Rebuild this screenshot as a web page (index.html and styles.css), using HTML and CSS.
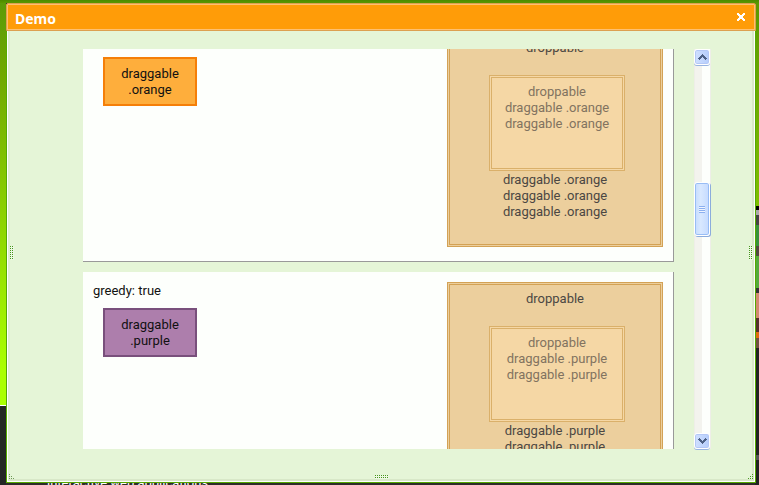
FILE: index.html
```
<!DOCTYPE html>
<html lang="en">
<head>
<meta charset="utf-8">
<title>Demo</title>
<link rel="stylesheet" href="styles.css">
</head>
<body>
<p class="page-text">interactive web applications.</p>
<section class="window" aria-label="Demo">
  <header class="titlebar">
    <h1 class="title">Demo</h1>
    <button class="close" type="button" aria-label="Close">
      <svg width="8" height="8" viewBox="0 0 8 8" shape-rendering="crispEdges"><path fill="#fff" d="M0 0h2v1h1v1h2v-1h1v-1h2v2h-1v1h-1v2h1v1h1v2h-2v-1h-1v-1h-2v1h-1v1h-2v-2h1v-1h1v-2h-1v-1h-1z"/></svg>
    </button>
  </header>
  <div class="content">
    <main class="viewport">
      <div class="demos">
        <section class="card">
          <div class="source">
            <p class="caption"></p>
            <div class="draggable orange">draggable<br>.orange</div>
          </div>
          <div class="droppable">
            <p>droppable</p>
            <div class="droppable-inner">
              <p>droppable</p>
              <p>draggable .orange</p>
              <p>draggable .orange</p>
            </div>
            <p>draggable .orange</p>
            <p>draggable .orange</p>
            <p>draggable .orange</p>
          </div>
        </section>
        <section class="card">
          <div class="source">
            <p class="caption">greedy: true</p>
            <div class="draggable purple">draggable<br>.purple</div>
          </div>
          <div class="droppable">
            <p>droppable</p>
            <div class="droppable-inner">
              <p>droppable</p>
              <p>draggable .purple</p>
              <p>draggable .purple</p>
            </div>
            <p>draggable .purple</p>
            <p>draggable .purple</p>
          </div>
        </section>
      </div>
    </main>
    <div class="scrollbar">
      <button class="arrow" type="button" aria-label="Scroll up">
        <svg width="9" height="6" viewBox="0 0 9 6" shape-rendering="crispEdges"><path fill="#4d6185" d="M4 0h1v1h1v1h1v1h1v1h1v1h-1v1h-1v-1h-1v-1h-1v-1h-1v1h-1v1h-1v1h-1v-1h-1v-1h1v-1h1v-1h1v-1h1z"/></svg>
      </button>
      <div class="track-before"></div>
      <button class="thumb" type="button" aria-label="Scroll position"><span class="grip"></span></button>
      <div class="track-after"></div>
      <button class="arrow" type="button" aria-label="Scroll down">
        <svg width="9" height="6" viewBox="0 0 9 6" shape-rendering="crispEdges"><path fill="#4d6185" d="M4 6h1v-1h1v-1h1v-1h1v-1h1v-1h-1v-1h-1v1h-1v1h-1v1h-1v-1h-1v-1h-1v-1h-1v1h-1v1h1v1h1v1h1v1h1z"/></svg>
      </button>
    </div>
    <span class="handle handle-left"></span>
    <span class="handle handle-right"></span>
    <span class="handle handle-bottom"></span>
    <svg class="corner corner-left" width="5" height="5" viewBox="0 0 5 5" shape-rendering="crispEdges"><path fill="#6f9a58" d="M0 0h1v1h-1zM0 2h1v1h-1zM2 2h1v1h-1zM0 4h1v1h-1zM2 4h1v1h-1zM4 4h1v1h-1z"/></svg>
    <svg class="corner corner-right" width="5" height="5" viewBox="0 0 5 5" shape-rendering="crispEdges"><path fill="#4a9a20" d="M4 0h1v1h-1zM4 2h1v1h-1zM2 2h1v1h-1zM0 4h1v1h-1zM2 4h1v1h-1zM4 4h1v1h-1z"/></svg>
  </div>
</section>
</body>
</html>
```
FILE: styles.css
```
* {
  box-sizing: border-box;
}

body {
  position: relative;
  display: flex;
  height: 100vh;
  margin: 0;
  padding: 3px 3px 2px 6px;
  overflow: hidden;
  font: 13px/16px Roboto, "Liberation Sans", sans-serif;
  color: #111;
  background:
    linear-gradient(#4d8a00, #5a9800) top / 100% 3px no-repeat,
    linear-gradient(#5a9800, #7fbe00 206px, #000 206px 210px, #aaa 210px 215px, #444 215px 225px, #38903c 225px 246px, #504a40 246px 256px, #55aa3c 256px 288px, #333 288px 293px, #d28a70 293px 318px, #55302c 318px 332px, #e06a10 332px 338px, #705040 338px 348px, #222 348px 455px, #555 455px 460px, #222 460px) right / 4px 100% no-repeat,
    linear-gradient(#5b9a08, #70a800 75px, #aaff00 370px 405px, #fff 405px 406px, #242624 406px) left / 6px 100% no-repeat,
    #2e2b29;
}

p {
  margin: 0;
}

button {
  display: flex;
  align-items: center;
  justify-content: center;
  padding: 0;
  border: 0;
}

.page-text {
  position: absolute;
  left: 47px;
  bottom: -6px;
  color: #fff;
}

.window {
  position: relative;
  display: flex;
  flex: 1;
  flex-direction: column;
  min-width: 0;
}

.titlebar {
  display: flex;
  align-items: center;
  justify-content: space-between;
  height: 28px;
  padding: 0 9px 0 8px;
  color: #fff;
  background: #ff9c08;
  border: 1px solid #dca050;
  border-radius: 2px 2px 0 0;
  box-shadow: inset 0 0 0 1px #ffc070;
}

.title {
  margin: 0;
  padding-top: 3px;
  font: bold 14px/18px "Noto Sans", "Open Sans", sans-serif;
}

.close {
  width: 10px;
  height: 16px;
  background: none;
}

.content {
  position: relative;
  display: flex;
  flex: 1;
  gap: 20px;
  min-height: 0;
  padding: 18px 44px 33px 76px;
  background: #e5f5d7;
  border: solid #55aa00;
  border-width: 0 1px 1px;
  box-shadow: inset 1px 0 #fff, inset -1px -1px #fff, inset 3px 0 #dfeed0, inset -3px -3px #d8e8c8;
}

.viewport {
  flex: 1;
  min-width: 0;
  overflow: hidden;
}

.demos {
  display: flex;
  flex-direction: column;
  gap: 10px;
  margin-top: -28px;
}

.card {
  display: flex;
  justify-content: space-between;
  height: 241px;
  padding: 10px;
  background: #fdfffc;
  border: solid #999;
  border-width: 0 1px 1px 0;
}

.caption {
  height: 16px;
  padding-top: 1px;
}

.draggable {
  width: 94px;
  margin: 10px;
  padding: 7px 0 6px;
  text-align: center;
  border: 2px solid;
}

.orange {
  background: #feae3c;
  border-color: #f57f08;
}

.purple {
  background: #ad7eac;
  border-color: #79507c;
}

.droppable,
.droppable-inner {
  text-align: center;
  border: 3px double #d3a255;
}

.droppable {
  width: 216px;
  height: 216px;
  padding-top: 6px;
  color: #4b4743;
  background: #eccf9d;
}

.droppable-inner {
  width: 136px;
  height: 96px;
  margin: 19px 0 1px 39px;
  padding-top: 6px;
  color: #827360;
  background: #f5d7a5;
  border-color: #dab06a;
}

.scrollbar {
  display: flex;
  flex-direction: column;
  width: 17px;
  padding-right: 1px;
  background: linear-gradient(90deg, #eeeee8 0 1px, #f3f3ee 1px 8px, #fdfffc 8px 16px, #eeeee8 16px);
}

.arrow,
.thumb {
  width: 16px;
  background: linear-gradient(90deg, #d0e0ff, #b5cdfb);
  border: 1px solid #fff;
  border-radius: 3px;
  box-shadow: inset 0 0 0 1px #b4c8f6, 0 1px #98b4e0;
}

.arrow {
  height: 16px;
}

.thumb {
  height: 54px;
  background: linear-gradient(90deg, #c6dcff, #d8e8ff 40%, #c4daff);
  box-shadow: inset 0 0 0 1px #98bdf5, 1px 1px #8cacdc;
}

.grip {
  width: 6px;
  height: 7px;
  background: repeating-linear-gradient(#8cb0f0 0 1px, #eef4ff 1px 2px);
}

.track-before {
  flex: 117;
}

.track-after {
  flex: 197;
}

.handle {
  position: absolute;
  background:
    linear-gradient(90deg, transparent 1px, #edf8e3 1px) 0 0 / 2px 2px,
    linear-gradient(#46961c 1px, #edf8e3 1px) 0 0 / 2px 2px;
}

.handle-left,
.handle-right {
  top: calc(50% - 11px);
  width: 4px;
  height: 14px;
}

.handle-left {
  left: 3px;
}

.handle-right {
  right: 2px;
}

.handle-bottom {
  bottom: 3px;
  left: calc(50% - 6px);
  width: 14px;
  height: 4px;
}

.corner {
  position: absolute;
  bottom: 3px;
}

.corner-left {
  left: 2px;
}

.corner-right {
  right: 2px;
}
```
